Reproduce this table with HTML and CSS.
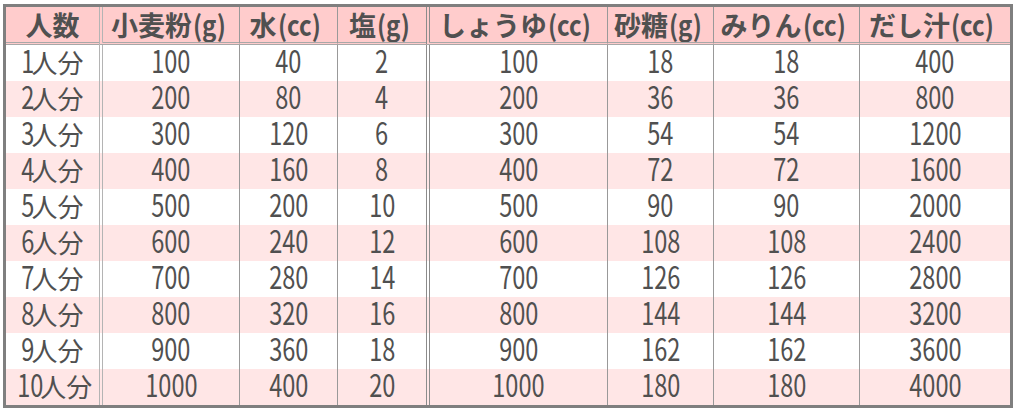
FILE: index.html
```html
<!DOCTYPE html>
<html lang="ja">
<head>
<meta charset="utf-8">
<link rel="stylesheet" href="styles.css">
</head>
<body>
<div class="wrap">
<table class="recipe">
  <colgroup>
    <col class="c1"><col class="c2"><col class="c3"><col class="c4"><col class="c5"><col class="c6"><col class="c7"><col class="c8">
  </colgroup>
  <thead>
    <tr>
      <th>人数</th>
      <th class="dbl">小麦粉<span class="u">(g)</span></th>
      <th class="sep">水<span class="u">(cc)</span></th>
      <th class="sep">塩<span class="u">(g)</span></th>
      <th class="dbl2">しょうゆ<span class="u">(cc)</span></th>
      <th class="sep">砂糖<span class="u">(g)</span></th>
      <th class="sep">みりん<span class="u">(cc)</span></th>
      <th class="sep">だし汁<span class="u">(cc)</span></th>
    </tr>
  </thead>
  <tbody>
    <tr><td class="who"><span class="n">1</span><span class="jp">人分</span></td><td class="dbl"><span class="n">100</span></td><td class="sep"><span class="n">40</span></td><td class="sep"><span class="n">2</span></td><td class="dbl2"><span class="n">100</span></td><td class="sep"><span class="n">18</span></td><td class="sep"><span class="n">18</span></td><td class="sep"><span class="n">400</span></td></tr>
    <tr><td class="who"><span class="n">2</span><span class="jp">人分</span></td><td class="dbl"><span class="n">200</span></td><td class="sep"><span class="n">80</span></td><td class="sep"><span class="n">4</span></td><td class="dbl2"><span class="n">200</span></td><td class="sep"><span class="n">36</span></td><td class="sep"><span class="n">36</span></td><td class="sep"><span class="n">800</span></td></tr>
    <tr><td class="who"><span class="n">3</span><span class="jp">人分</span></td><td class="dbl"><span class="n">300</span></td><td class="sep"><span class="n">120</span></td><td class="sep"><span class="n">6</span></td><td class="dbl2"><span class="n">300</span></td><td class="sep"><span class="n">54</span></td><td class="sep"><span class="n">54</span></td><td class="sep"><span class="n">1200</span></td></tr>
    <tr><td class="who"><span class="n">4</span><span class="jp">人分</span></td><td class="dbl"><span class="n">400</span></td><td class="sep"><span class="n">160</span></td><td class="sep"><span class="n">8</span></td><td class="dbl2"><span class="n">400</span></td><td class="sep"><span class="n">72</span></td><td class="sep"><span class="n">72</span></td><td class="sep"><span class="n">1600</span></td></tr>
    <tr><td class="who"><span class="n">5</span><span class="jp">人分</span></td><td class="dbl"><span class="n">500</span></td><td class="sep"><span class="n">200</span></td><td class="sep"><span class="n">10</span></td><td class="dbl2"><span class="n">500</span></td><td class="sep"><span class="n">90</span></td><td class="sep"><span class="n">90</span></td><td class="sep"><span class="n">2000</span></td></tr>
    <tr><td class="who"><span class="n">6</span><span class="jp">人分</span></td><td class="dbl"><span class="n">600</span></td><td class="sep"><span class="n">240</span></td><td class="sep"><span class="n">12</span></td><td class="dbl2"><span class="n">600</span></td><td class="sep"><span class="n">108</span></td><td class="sep"><span class="n">108</span></td><td class="sep"><span class="n">2400</span></td></tr>
    <tr><td class="who"><span class="n">7</span><span class="jp">人分</span></td><td class="dbl"><span class="n">700</span></td><td class="sep"><span class="n">280</span></td><td class="sep"><span class="n">14</span></td><td class="dbl2"><span class="n">700</span></td><td class="sep"><span class="n">126</span></td><td class="sep"><span class="n">126</span></td><td class="sep"><span class="n">2800</span></td></tr>
    <tr><td class="who"><span class="n">8</span><span class="jp">人分</span></td><td class="dbl"><span class="n">800</span></td><td class="sep"><span class="n">320</span></td><td class="sep"><span class="n">16</span></td><td class="dbl2"><span class="n">800</span></td><td class="sep"><span class="n">144</span></td><td class="sep"><span class="n">144</span></td><td class="sep"><span class="n">3200</span></td></tr>
    <tr><td class="who"><span class="n">9</span><span class="jp">人分</span></td><td class="dbl"><span class="n">900</span></td><td class="sep"><span class="n">360</span></td><td class="sep"><span class="n">18</span></td><td class="dbl2"><span class="n">900</span></td><td class="sep"><span class="n">162</span></td><td class="sep"><span class="n">162</span></td><td class="sep"><span class="n">3600</span></td></tr>
    <tr><td class="who"><span class="n">10</span><span class="jp">人分</span></td><td class="dbl"><span class="n">1000</span></td><td class="sep"><span class="n">400</span></td><td class="sep"><span class="n">20</span></td><td class="dbl2"><span class="n">1000</span></td><td class="sep"><span class="n">180</span></td><td class="sep"><span class="n">180</span></td><td class="sep"><span class="n">4000</span></td></tr>
  </tbody>
</table>
</div>
</body>
</html>
```

FILE: styles.css
```css
html, body {
  margin: 0;
  padding: 0;
  background: #ffffff;
}

.wrap {
  padding: 4px 0 0 3px;
}

.recipe {
  border-collapse: separate;
  border-spacing: 0;
  table-layout: fixed;
  width: 1010px;
  border: 3px solid #7f7f7f;
  color: #505050;
  font-family: "Noto Sans CJK JP", sans-serif;
}

.c1 { width: 93px; }
.c2 { width: 140px; }
.c3 { width: 98px; }
.c4 { width: 89px; }
.c5 { width: 181px; }
.c6 { width: 106px; }
.c7 { width: 146px; }
.c8 { width: 151px; }

.recipe th,
.recipe td {
  padding: 0;
  text-align: center;
  white-space: nowrap;
  overflow: hidden;
}

.recipe th {
  height: 34px;
  background: #ffcccc;
  font-size: 27px;
  font-weight: bold;
  line-height: 34px;
  border-bottom: 3px double #a8a8a8;
}

.recipe th .u {
  display: inline-block;
  font-size: 28px;
  margin-left: 1px;
  transform: scaleX(0.86);
  transform-origin: left center;
  line-height: 34px;
}

.recipe td {
  height: 36px;
  font-size: 30px;
  line-height: 36px;
}

.recipe tbody tr:nth-child(even) td {
  background: #ffe6e6;
}

.recipe .n {
  display: inline-block;
  line-height: 36px;
  font-size: 31px;
  transform: translateY(-3px) scaleX(0.76);
  transform-origin: center;
}

.recipe .who .n {
  transform-origin: right center;
  margin-left: -4px;
}

.recipe .jp {
  display: inline-block;
  font-size: 26px;
  line-height: 1;
  margin-left: -3px;
  transform: translateY(-3px);
}

.recipe .sep {
  border-left: 1px solid #999999;
}

.recipe .dbl {
  border-left: 4px double #b4b4b4;
}

.recipe .dbl2 {
  border-left: 4px double #8c8c8c;
}
```
